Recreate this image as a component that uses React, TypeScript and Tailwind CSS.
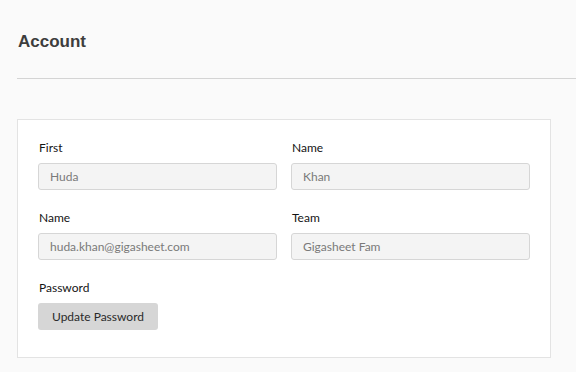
const font = { fontFamily: "Lato, 'Noto Sans', sans-serif" };

function Field({ label, value }: { label: string; value: string }) {
  return (
    <div className="flex flex-col">
      <label className="text-[12px] leading-[17px] text-[#141414] mb-[7px] pl-[1px]">{label}</label>
      <div className="h-[27px] rounded-[3px] border border-[#d6d6d6] bg-[#f4f4f4] px-[11px] flex items-center text-[12px] leading-[16px] text-[#7a7a7a] pt-[1px]">
        {value}
      </div>
    </div>
  );
}

export default function App() {
  return (
    <div className="w-[576px] h-[372px] bg-[#fafafa] overflow-hidden" style={font}>
      <div className="pl-[18px] pt-[31px] h-[78px]">
        <h1
          className="text-[17px] leading-[21px] font-bold text-[#3d3d3d]"
          style={{ fontFamily: "'Liberation Sans', Arial, sans-serif" }}
        >
          Account
        </h1>
      </div>
      <div className="ml-[17px] border-t border-[#d4d4d4]" />
      <div className="ml-[17px] mt-[40px] w-[534px] h-[239px] bg-white border border-[#e3e3e3] px-[20px] pt-[19px]">
        <div className="grid grid-cols-2 gap-x-[14px] gap-y-[19px]">
          <Field label="First" value="Huda" />
          <Field label="Name" value="Khan" />
          <Field label="Name" value="huda.khan@gigasheet.com" />
          <Field label="Team" value="Gigasheet Fam" />
        </div>
        <div className="mt-[19px] flex flex-col items-start">
          <span className="text-[12px] leading-[17px] text-[#141414] mb-[7px] pl-[1px]">Password</span>
          <button className="h-[27px] w-[120px] rounded-[3px] bg-[#d6d6d6] text-[12px] leading-[16px] text-[#2a2a2a] pt-[1px]">
            Update Password
          </button>
        </div>
      </div>
    </div>
  );
}
